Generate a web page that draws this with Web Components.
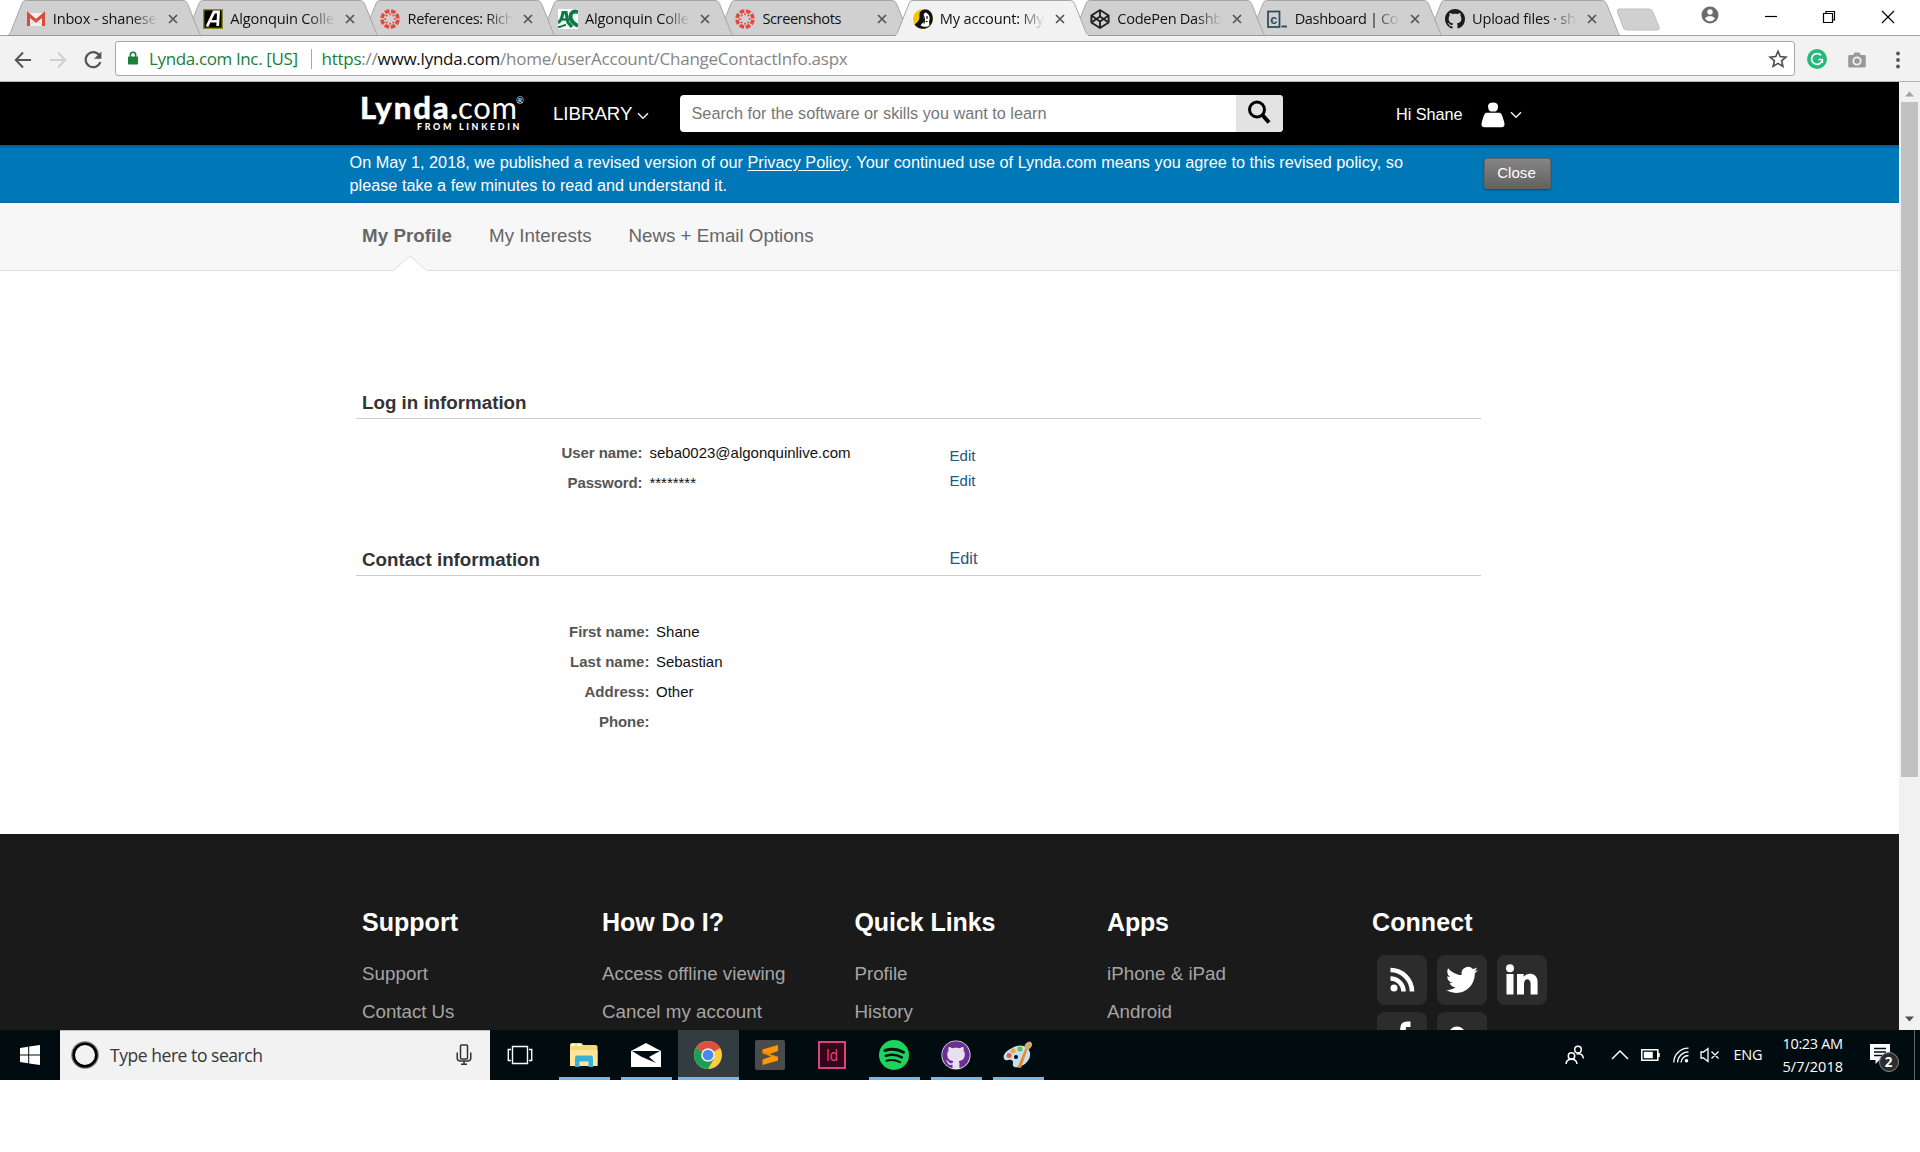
<!DOCTYPE html>
<html lang="en">
<head>
<meta charset="utf-8">
<title>My account: My Profile</title>
<style>
html,body{margin:0;padding:0;background:#fff}
body{width:1920px;height:1152px;overflow:hidden;font-family:"Liberation Sans",Arial,sans-serif}
</style>
</head>
<body>
<desktop-screen></desktop-screen>
<script>
const ICONS = {
gmail:[20,20,'<rect x="1" y="4" width="18" height="13" fill="#f1f1f1"/><path d="M2.500 17V5.500l7.500 6.500 7.500-6.500V17" fill="none" stroke="#d54b3d" stroke-width="3"/><path d="M4.500 16l4-4.500M15.500 16l-4-4.500" stroke="#ccc"/>'],
alg:[20,20,'<rect x=".7" y=".7" width="18.6" height="18.6" fill="#000" stroke="#8d8a1d" stroke-width="1.4"/><path d="M4 17.5L11 3h4.5l-.8 14" fill="none" stroke="#fff" stroke-width="2.8"/><path d="M7.5 12.3h7" stroke="#fff" stroke-width="2.4"/>'],
canvas:[20,20,'<circle cx="10" cy="10" r="8" fill="none" stroke="#e2483c" stroke-width="3.6" stroke-dasharray="4.6 1.68" transform="rotate(6 10 10)"/><g fill="#e2483c"><circle cx="10" cy="5.2" r="1"/><circle cx="10" cy="14.8" r="1"/><circle cx="5.2" cy="10" r="1"/><circle cx="14.8" cy="10" r="1"/><circle cx="6.6" cy="6.6" r="1"/><circle cx="13.4" cy="6.6" r="1"/><circle cx="6.6" cy="13.4" r="1"/><circle cx="13.4" cy="13.4" r="1"/></g>'],
ac:[20,20,'<rect width="20" height="20" fill="#fff"/><path d="M0 13.500c3-1 4-4 5-10h3l2 10 4 4.500" fill="none" stroke="#0b7a43" stroke-width="3.200"/><path d="M4 10.500h5" stroke="#0b7a43" stroke-width="2.400"/><path d="M20 3c-5-1.500-7.500 1-7.500 4.500s3 7 7.500 9.500" fill="none" stroke="#0b7a43" stroke-width="4"/><path d="M0 18c4 0 5-2 8-2" fill="none" stroke="#0b7a43" stroke-width="1.800"/>'],
lynda:[20,20,'<circle cx="10" cy="10" r="10" fill="#f8c600"/><path d="M13 .6C7 .6 6 4 6.500 8c0 3-1.500 5-5 7.500 3 4.500 10 6 15 2C20 14 20.500 10 19 5 17.500 2.500 15.500 .6 13 .6z" fill="#111"/><path d="M12.500 3.500c-2.500 1-2.500 5-1 8.500l-4 4.200c3 2.300 7 2 9 .3l-.5-4c1.500-3 .5-8-3.500-9z" fill="#fff"/><path d="M10.500 6.500c1 2 1.500 4 .5 8M14 7v3M12.500 12.500h2" stroke="#111" stroke-width="1.200" fill="none"/>'],
codepen:[20,20,'<g fill="none" stroke="#222" stroke-width="1.900" stroke-linejoin="round"><path d="M10 1l8.600 5.500v7L10 19l-8.600-5.500v-7z"/><path d="M1.400 6.500L10 12.500l8.600-6M1.400 13.500L10 7.500l8.600 6M10 1v6.500M10 12.500V19"/></g>'],
cdash:[20,20,'<rect x="1" y="2.500" width="11.500" height="15.500" fill="none" stroke="#234a5d" stroke-width="1.700"/><text x="3.200" y="14.500" font-family="Liberation Sans" font-weight="700" font-size="12.500" fill="#234a5d">c</text><path d="M14.500 17.500h5.500" stroke="#234a5d" stroke-width="1.800"/>'],
github:[16,16,'<path fill="#1b1b1b" d="M8 0C3.58 0 0 3.58 0 8c0 3.54 2.290 6.530 5.470 7.590.4.070.550-.170.550-.380 0-.190-.010-.820-.010-1.490-2.010.370-2.530-.490-2.690-.940-.090-.230-.480-.940-.820-1.130-.280-.150-.680-.520-.010-.530.630-.010 1.080.580 1.230.820.720 1.210 1.870.870 2.330.660.070-.520.280-.870.510-1.070-1.780-.2-3.640-.890-3.640-3.950 0-.870.310-1.590.820-2.150-.080-.2-.360-1.020.080-2.120 0 0 .670-.210 2.200.820.640-.180 1.320-.270 2-.270.680 0 1.360.090 2 .270 1.530-1.040 2.200-.820 2.200-.820.440 1.100.160 1.920.080 2.120.510.560.820 1.270.820 2.150 0 3.070-1.870 3.750-3.650 3.950.290.250.540.730.540 1.480 0 1.070-.010 1.930-.010 2.200 0 .210.150.460.550.380A8.013 8.013 0 0016 8c0-4.420-3.580-8-8-8z"/>'],
x:[10,10,'<path d="M1 1l8 8M9 1L1 9" stroke="#555" stroke-width="1.700"/>'],
back:[18,18,'<path d="M17 9H2M9 1.500L1.800 9 9 16.500" fill="none" stroke="#555" stroke-width="2"/>'],
fwd:[18,18,'<path d="M1 9h15M9 1.500L16.200 9 9 16.500" fill="none" stroke="#d0d0d0" stroke-width="2"/>'],
reload:[20,20,'<path d="M16.200 5.200A7.500 7.500 0 1 0 17.300 12" fill="none" stroke="#555" stroke-width="2.200"/><path d="M18.400 1.500v7.300h-7.300z" fill="#555"/>'],
lock:[12,14,'<rect x="1" y="5.500" width="10" height="8" rx=".8" fill="#188038"/><path d="M3.300 6V3.900a2.700 2.700 0 0 1 5.400 0V6" fill="none" stroke="#188038" stroke-width="1.500"/>'],
star:[20,20,'<path d="M10 2.300l2.200 5.300 5.700.5-4.300 3.700 1.300 5.600-4.900-3-4.900 3 1.300-5.600L2.100 8.100l5.700-.5z" fill="none" stroke="#4c4c4c" stroke-width="1.600"/>'],
gram:[20,20,'<circle cx="10" cy="10" r="10" fill="#25b97a"/><path d="M14 6.300A5.400 5.400 0 1 0 15.400 10.500M15.300 14v-3.500h-3.800" fill="none" stroke="#fff" stroke-width="1.700"/>'],
camera:[18,18,'<path d="M1.500 4h3.700l1.300-2.500h5L12.800 4h3.700a1.300 1.300 0 0 1 1.300 1.300v10a1.300 1.300 0 0 1-1.300 1.300h-15A1.300 1.300 0 0 1 .2 15.300v-10A1.300 1.300 0 0 1 1.500 4z" fill="#999"/><circle cx="9" cy="10" r="3.700" fill="none" stroke="#f2f2f2" stroke-width="1.800"/>'],
dots:[4,18,'<g fill="#555"><circle cx="2" cy="2.500" r="1.900"/><circle cx="2" cy="9" r="1.900"/><circle cx="2" cy="15.500" r="1.900"/></g>'],
newtab:[46,24,'<path d="M3 1h30q3 0 4 3l6 15q1 3-2 3H11q-3 0-4-3L1.500 4Q1 1 3 1z" fill="#d0d0d0" stroke="#c0c0c0"/>'],
person:[18,18,'<circle cx="9" cy="9" r="8.500" fill="#6b6b6b"/><circle cx="9" cy="6" r="2.700" fill="#fff"/><path d="M3.800 12.200q5.200-4.400 10.400 0-2 3-5.200 3t-5.200-3z" fill="#fff"/>'],
min:[12,14,'<path d="M0 7.500h12" stroke="#000" stroke-width="1.200"/>'],
restore:[14,14,'<path d="M1.500 3.500h9v9h-9zM4 3.500v-2h8.500V10h-2" fill="none" stroke="#000" stroke-width="1.200"/>'],
close:[14,14,'<path d="M1 1l12 12M13 1L1 13" stroke="#000" stroke-width="1.200"/>'],
chev:[12,8,'<path d="M1 1.300l5 5 5-5" fill="none" stroke="#eee" stroke-width="1.500"/>'],
mag:[24,24,'<circle cx="10" cy="9.500" r="7.500" fill="none" stroke="#000" stroke-width="3"/><path d="M15 14.500l7 8" stroke="#000" stroke-width="4"/>'],
user:[26,26,'<path d="M8 4.500Q8 .6 13 .6t5 3.900-2.500 5h-5Q8 8 8 4.500zM6.500 10.800h13q2 0 3.200 4.500 1.800 5.200 1.800 7.200 0 2.700-3 2.700h-17q-3 0-3-2.700 0-2 1.800-7.200 1.200-4.500 3.200-4.500z" fill="#fff"/>'],
rss:[26,26,'<circle cx="5" cy="21" r="3.500" fill="#fff"/><path d="M1.500 11.500A13 13 0 0 1 14.500 24.500M1.500 3A21.500 21.500 0 0 1 23 24.500" fill="none" stroke="#fff" stroke-width="4.600"/>'],
twitter:[24,24,'<path fill="#fff" d="M23.953 4.570a10 10 0 01-2.825.775 4.958 4.958 0 002.163-2.723c-.951.555-2.005.959-3.127 1.184a4.920 4.920 0 00-8.384 4.482C7.690 8.095 4.067 6.130 1.640 3.162a4.822 4.822 0 00-.666 2.475c0 1.710.870 3.213 2.188 4.096a4.904 4.904 0 01-2.228-.616v.060a4.923 4.923 0 003.946 4.827 4.996 4.996 0 01-2.212.085 4.936 4.936 0 004.604 3.417 9.867 9.867 0 01-6.102 2.105c-.390 0-.779-.023-1.170-.067a13.995 13.995 0 007.557 2.209c9.053 0 13.998-7.496 13.998-13.985 0-.210 0-.420-.015-.630A9.935 9.935 0 0024 4.590z"/>'],
linkedin:[34,32,'<g fill="#fff"><circle cx="5" cy="4.300" r="4"/><rect x="1.500" y="10" width="7" height="20.500"/><path d="M12 10h6.600v2.800c3.500-5 14-4.500 14 5V30.500h-7V19.800c0-6-6.600-6-6.600 0v10.700h-7z"/></g>'],
fb:[20,30,'<path d="M16.500 3.200H13q-4 0-4 4V30M3 14h12" fill="none" stroke="#fff" stroke-width="5.600"/>'],
gplus:[30,30,'<circle cx="12" cy="10" r="6.500" fill="none" stroke="#fff" stroke-width="4"/>'],
win:[20,20,'<path fill="#fff" d="M0 3l8.200-1.200v7.700H0zM9.200 1.600L20 0v9.500H9.200zM0 10.500h8.200v7.700L0 17zM9.200 10.500H20V20L9.200 18.400z"/>'],
cortana:[28,28,'<circle cx="14" cy="14" r="12.200" fill="none" stroke="#000" stroke-opacity=".5" stroke-width="3.200"/><circle cx="14" cy="14" r="11.300" fill="none" stroke="#000" stroke-width="2.600"/>'],
mic:[16,22,'<g fill="none" stroke="#333" stroke-width="1.500"><rect x="4.500" y="1" width="7" height="14" rx="1"/><path d="M1.200 8.500V14q0 3 3.300 3h7q3.300 0 3.300-3V8.500M8 17v3M5 20.200h6"/></g>'],
taskview:[26,20,'<g fill="none" stroke="#fff" stroke-width="1.400"><path d="M5.500 1.500h15v17h-15zM4 4.500H1.300v11H4M22 4.500h2.700v11H22"/></g>'],
folder:[30,26,'<path d="M1 3q0-2 2-2h8q3 0 3 2h12.500q2 0 2 2v18q0 1-1 1h-25.500q-1 0-1-1z" fill="#f7d774"/><path d="M1 8h27.500v16H1z" fill="#ffe69a"/><path d="M2 2h4v2H2zM8 2h4v2H8z" fill="#fff"/><path d="M6 25V16q0-2.500 2.500-2.500h13q2.500 0 2.500 2.500v9h-4.500v-5.500h-9V25z" fill="#38b0d8"/>'],
mail:[30,24,'<path d="M0 8L15 0l15 8v16H0z" fill="#fff"/><path d="M1 8h28L18 14l7 6L10 13.500z" fill="#010c10"/>'],
chrome:[28,28,'<circle cx="14" cy="14" r="14" fill="#fbce40"/><path d="M14 14L1.900 7A14 14 0 0 1 26.100 7z" fill="#dd4f43"/><path d="M14 0a14 14 0 0 1 12.100 7H14z" fill="#dd4f43"/><path d="M1.900 7A14 14 0 0 0 14 28l6-10.500-6-3.500z" fill="#1a9f5b"/><circle cx="14" cy="14" r="6.800" fill="#f1f1f1"/><circle cx="14" cy="14" r="5.300" fill="#4a87f0"/>'],
sublime:[30,30,'<rect width="30" height="30" rx="2" fill="#4b4b4b"/><path d="M7.500 9.500L23 5v6l-8.500 3L23 16.800v3.700L7.500 25v-5.500L16 16.500 7.500 13.500z" fill="#ff9800"/><path d="M7.500 13.500l15.500 4-8.500-3.500-6-2z" fill="#d97c00"/>'],
indesign:[28,28,'<rect x="1" y="1" width="26" height="26" fill="#33061b" stroke="#f0478b" stroke-width="1.800"/><text x="14" y="19.500" text-anchor="middle" font-family="Open Sans" font-size="15.500" textLength="12" lengthAdjust="spacingAndGlyphs" fill="#f0478b">Id</text>'],
spotify:[30,30,'<circle cx="15" cy="15" r="15" fill="#1ed45f"/><g fill="none" stroke="#03120a" stroke-linecap="round"><path d="M6 10.500q9.500-3 18.500 1.800" stroke-width="3"/><path d="M6.800 15.800q8.500-2.500 16 1.600" stroke-width="2.500"/><path d="M7.500 20.700q7-2 13.500 1.500" stroke-width="2"/></g>'],
ghdesk:[30,30,'<circle cx="15" cy="15" r="14.600" fill="#e8dff0"/><g transform="translate(1.200 1.200) scale(1.725)"><path fill="#6b2f94" d="M8 0C3.580 0 0 3.580 0 8c0 3.540 2.290 6.530 5.470 7.590.4.070.550-.170.550-.380 0-.190-.010-.820-.010-1.490-2.010.370-2.530-.490-2.690-.940-.090-.230-.480-.940-.820-1.130-.280-.150-.680-.520-.010-.530.630-.010 1.080.580 1.230.820.720 1.210 1.870.870 2.330.660.070-.520.280-.870.510-1.070-1.780-.2-3.640-.890-3.640-3.950 0-.870.310-1.590.820-2.150-.080-.2-.360-1.020.080-2.120 0 0 .670-.210 2.200.820.640-.180 1.320-.270 2-.270.680 0 1.360.090 2 .270 1.530-1.040 2.200-.820 2.200-.820.440 1.100.160 1.920.080 2.120.510.560.820 1.270.820 2.150 0 3.070-1.870 3.750-3.650 3.950.290.250.540.730.540 1.480 0 1.070-.010 1.930-.010 2.200 0 .210.150.460.550.380A8.013 8.013 0 0016 8c0-4.420-3.580-8-8-8z"/></g>'],
paint:[30,30,'<path d="M9 8c8-5 17-2 18 5 1 6-4 12-11 14-5 1-7-1-6-4 .5-3-2-4-5-3-4 1-5-2-4-5 1-3 4-5 8-7z" fill="#c7dff0"/><circle cx="13" cy="17" r="2" fill="#010c10"/><circle cx="6" cy="15.500" r="2.500" fill="#e25a4c"/><circle cx="10" cy="11" r="2.500" fill="#f0a638"/><circle cx="17" cy="9" r="2.600" fill="#6cc04a"/><path d="M14.500 27.500L22.500 8l2 1-6.500 19z" fill="#e28c2e"/><path d="M21.500 7q0-5 6-5.500 2 2 1.500 4-2 4-4.500 4z" fill="#d4aa70"/>'],
people:[20,20,'<g fill="none" stroke="#fff" stroke-width="1.500"><circle cx="13" cy="4.500" r="3.300"/><circle cx="6.500" cy="11" r="3.200"/><path d="M1 19q.5-4.800 5.500-4.800T12 19M11.500 9q6-1.500 7 4.500"/></g>'],
up:[18,10,'<path d="M1 9l8-8 8 8" fill="none" stroke="#fff" stroke-width="1.500"/>'],
battery:[20,12,'<path d="M.8.800h16v10.400H.8zM18 4v4" fill="none" stroke="#fff" stroke-width="1.500"/><rect x="2.800" y="2.800" width="9" height="6.400" fill="#fff"/>'],
wifi:[16,16,'<g fill="none" stroke="#fff" stroke-width="1.300"><path d="M.8 15.500A14.500 14.500 0 0 1 15.500 1.200"/><path d="M4.500 15.500A11 11 0 0 1 15.500 4.800M8 15.500a7.500 7.500 0 0 1 7.500-7" /></g><circle cx="13.500" cy="13.800" r="1.800" fill="#fff"/>'],
mute:[20,16,'<path d="M1 5h2.500L8 1.500v13L3.500 11H1zM11.500 4.500l7 7M18.500 4.500l-7 7" fill="none" stroke="#fff" stroke-width="1.300"/>'],
note:[22,20,'<path d="M0 0h20v16H9.500L5.500 20v-4H0z" fill="#fff"/><path d="M4 4.500h12M4 8h12M4 11.500h12" stroke="#010c10" stroke-width="1.300"/>']
};
class Base extends HTMLElement{
  connectedCallback(){ if(!this.shadowRoot){ this.attachShadow({mode:'open'}).innerHTML=this.render(); this.ready&&this.ready(); } }
}
/* Single-line text tracked out to a given width */
customElements.define('fit-text',class extends Base{
  render(){return '<style>:host{display:block;flex:none;white-space:nowrap;line-height:20px}span{display:inline-block}</style><span><slot></slot></span>'}
  ready(){
    const w=+this.getAttribute('w'); if(!w) return;
    const s=this.shadowRoot.querySelector('span');
    const n=this.textContent.length, nat=s.getBoundingClientRect().width;
    this.style.width=w+'px';
    if(n>1) s.style.letterSpacing=((w-nat)/(n-1)).toFixed(3)+'px';
  }
});
customElements.define('ui-icon',class extends Base{
  render(){const [a,b,c]=ICONS[this.getAttribute('name')];const w=this.getAttribute('w')||a,h=this.getAttribute('h')||b;
  return `<style>:host{display:block;flex:none;width:${w}px;height:${h}px}svg{display:block}</style><svg width="${w}" height="${h}" viewBox="0 0 ${a} ${b}">${c}</svg>`}
});
customElements.define('browser-tab',class extends Base{
  render(){const on=this.hasAttribute('active');
  return `<style>:host{display:grid;flex:none;width:194px;height:36px;margin-right:-16.600px}
  svg,.c{grid-area:1/1}.c{display:flex;align-items:flex-start}
  ui-icon.f{margin:9px 0 0 18px}
  .t{width:106px;margin:8px 0 0 7.300px;overflow:hidden;-webkit-mask-image:linear-gradient(90deg,#000 74%,transparent 99%)}
  .t.full{-webkit-mask-image:none}
  fit-text{font:14.600px "Open Sans","Noto Sans",sans-serif;line-height:20px;color:#111}
  ui-icon.x{margin:14px 0 0 9px}</style>
  <svg width="194" height="36"><path d="M0 35.500Q1.500 35 2.500 32.500L14 3.500Q15.200.500 17.500.500H175.500Q178 .5 179.500 3.500L191 32.500Q192 35 193.500 35.500" fill="${on?'#f2f2f2':'#d0d0d0'}" stroke="#a6a6a6"/>${on?'<path d="M1 35.500h192" stroke="#f2f2f2" stroke-width="1.600"/>':'<path d="M0 35.500h194" stroke="#999"/>'}</svg>
  <div class="c"><ui-icon class="f" name="${this.getAttribute('icon')}" w="20" h="20"></ui-icon><div class="t ${this.hasAttribute('full')?'full':''}"><fit-text w="${this.getAttribute('w')}">${this.getAttribute('label')}</fit-text></div><ui-icon class="x" name="x"></ui-icon></div>`}
});
customElements.define('browser-chrome',class extends Base{
  render(){
  const tabs=[['gmail','Inbox - shanese',104],['alg','Algonquin Colle',104],['canvas','References: Rich',106],['ac','Algonquin Colle',104],['canvas','Screenshots',79],['lynda','My account: My',104],['codepen','CodePen Dashb',105],['cdash','Dashboard | Co',104],['github','Upload files · sh',104]];
  return `<style>:host{display:flex;flex-direction:column;flex:none;height:82px;background:#f2f2f2;box-sizing:border-box;border-bottom:1px solid #b5b5b5}
  .strip{display:flex;height:36px;background:#fff;box-shadow:inset 0 -1px #a6a6a6;padding-left:7.500px;align-items:flex-start;flex:none}
  .bar{display:flex;align-items:flex-start}
  .bar>ui-icon{margin-top:15px}
  .omni{display:flex;align-items:center;box-sizing:border-box;width:1680px;height:35px;margin:5px 0 0 12px;border:1px solid #a9a9a9;border-radius:3px;background:#fff}
  .omni fit-text{font:17px "Open Sans","Noto Sans",sans-serif;line-height:34px;color:#858585}
  .omni .g{color:#188038}.k{color:#111}
  .sep{width:1px;height:20px;background:#aaa;margin:0 10px 0 12.500px}</style>
  <div class="strip">${tabs.map((t,i)=>`<browser-tab icon="${t[0]}" label="${t[1]}" w="${t[2]}" style="z-index:${i==5?20:9-i}" ${i==5?'active':''} ${i==4?'full':''}></browser-tab>`).join('')}
  <ui-icon name="newtab" w="46" h="24" style="margin:8px 0 0 12px"></ui-icon>
  <ui-icon name="person" style="margin:6px 0 0 38.500px"></ui-icon><ui-icon name="min" style="margin:9px 0 0 46.500px"></ui-icon><ui-icon name="restore" style="margin:10px 0 0 45px"></ui-icon><ui-icon name="close" style="margin:10px 0 0 45px"></ui-icon></div>
  <div class="bar"><ui-icon name="back" style="margin-left:14px"></ui-icon><ui-icon name="fwd" style="margin-left:17px"></ui-icon><ui-icon name="reload" style="margin:14px 0 0 16px"></ui-icon>
  <div class="omni"><ui-icon name="lock" style="margin:-1px 0 0 11px"></ui-icon><fit-text class="g" w="149" style="margin-left:10px;color:#188038">Lynda.com Inc. [US]</fit-text><div class="sep"></div><fit-text w="526">
<span class="g">https</span>://<span class="k">www.lynda.com</span>/home/userAccount/ChangeContactInfo.aspx</fit-text><ui-icon name="star" style="margin-left:auto;margin-right:6px"></ui-icon></div>
  <ui-icon name="gram" style="margin:13px 0 0 12px"></ui-icon><ui-icon name="camera" style="margin-left:21px"></ui-icon><ui-icon name="dots" style="margin-left:29.500px"></ui-icon></div>`}
});
customElements.define('site-header',class extends Base{
  render(){return `<style>:host{display:flex;flex:none;height:63px;background:#000;color:#fff;align-items:flex-start;padding-left:360px;box-sizing:border-box}
  .logo{width:164px;font-family:Lato,sans-serif}
  .word{display:flex;margin-top:15px;font-size:31px;height:20px}
  .reg{font-size:9.500px;line-height:10px;margin:-1px 0 0 -1px}
  .lib,.hi{display:flex;align-items:flex-start}
  .search{display:flex;width:603px;height:37px;margin:13px 0 0 31px;border-radius:4px;overflow:hidden;background:#fff}
  .search fit-text{font-size:16.250px;line-height:37px;color:#767676;margin-left:12px}
  .btn{width:47px;background:#e3e3e3;margin-left:auto;display:flex;justify-content:center}</style>
  <div class="logo"><div class="word"><fit-text w="98" style="font-weight:900;-webkit-text-stroke:.4px #fff">Lynda.</fit-text><fit-text w="59">com</fit-text><span class="reg">®</span></div><fit-text w="102.500" style="font-size:8.900px;font-weight:900;line-height:10px;margin:5.200px 0 0 57px">FROM LINKEDIN</fit-text></div>
  <div class="lib"><fit-text w="79.500" style="font-size:18.750px;margin:21.500px 0 0 29px">LIBRARY</fit-text><ui-icon name="chev" style="margin:30px 0 0 4px"></ui-icon></div>
  <div class="search"><fit-text w="355">Search for the software or skills you want to learn</fit-text><div class="btn"><ui-icon name="mag" style="margin-top:5px;margin-left:0"></ui-icon></div></div>
  <div class="hi"><fit-text w="66.500" style="font-size:16.250px;margin:21.500px 0 0 113.500px">Hi Shane</fit-text><ui-icon name="user" style="margin:19.500px 0 0 17px"></ui-icon><ui-icon name="chev" style="margin:29px 0 0 4px"></ui-icon></div>`}
});
customElements.define('policy-banner',class extends Base{
  render(){return `<style>:host{display:flex;flex:none;height:58px;background:linear-gradient(#035a8c,#0077b7 4px,#0077b7 56px,#116a9b);color:#fff;padding-left:349.500px;box-sizing:border-box}
  .m{width:1134px;padding-top:6px;font-size:16.250px}.m fit-text{line-height:23px}
  .b{height:29px;width:65px;margin-top:13px;border-radius:3px;border:1px solid #666;background:linear-gradient(#858585,#626262);box-shadow:0 1px 2px #0006;display:flex;justify-content:center;font-size:15px}
  u{text-underline-offset:2px}</style>
  <div class="m"><fit-text w="1053.500">On May 1, 2018, we published a revised version of our <u>Privacy Policy</u>. Your continued use of Lynda.com means you agree to this revised policy, so</fit-text><fit-text w="377.500">please take a few minutes to read and understand it.</fit-text></div>
  <div class="b"><fit-text w="38.500" style="line-height:27px;margin-left:-1px">Close</fit-text></div>`}
});
customElements.define('profile-nav',class extends Base{
  render(){return `<style>:host{display:flex;flex-direction:column;flex:none;height:68px;background:#f7f7f7;box-shadow:inset 0 -1px #ddd;color:#666;font-size:18.750px}
  .r{display:flex;padding:23px 0 0 362px;gap:37px}
  svg{display:block;margin:9px 0 0 393px}</style>
  <div class="r"><fit-text w="90" style="font-weight:700">My Profile</fit-text><fit-text w="102.500">My Interests</fit-text><fit-text w="185">News + Email Options</fit-text></div>
  <svg width="34" height="16"><path d="M.5 15.500L17 .8 33.500 15.500V16H.5z" fill="#fff"/><path d="M.5 15.500L17 .8 33.500 15.500" fill="none" stroke="#ddd"/></svg>`}
});
customElements.define('section-title',class extends Base{
  render(){return `<style>:host{display:flex;box-sizing:border-box;border-bottom:1px solid #ccc;padding-left:6px;font-size:18.750px;color:#333;font-weight:700;width:1125px}</style><slot></slot>`}
});
customElements.define('field-row',class extends Base{
  render(){return `<style>:host{display:flex;height:30px;font-size:15px;color:#111}.l{width:var(--lw);display:flex;justify-content:flex-end;color:#555;font-weight:700;margin-right:var(--g)}</style><div class="l"><fit-text w="${this.getAttribute('lw')}">${this.getAttribute('label')}</fit-text></div>${this.getAttribute('vw')?`<fit-text w="${this.getAttribute('vw')}">${this.getAttribute('value')}</fit-text>`:''}`}
});
customElements.define('account-content',class extends Base{
  render(){return `<style>:host{display:flex;flex-direction:column;flex:none;height:563px;padding-left:356px;background:#fff}
  .body{display:flex}.a{width:593.500px}.e{color:#23587f;font-size:15px;display:flex;flex-direction:column}
  .edit{color:#23587f;font-weight:400;font-size:16.250px}</style>
  <section-title style="padding-top:122px;height:148px"><fit-text w="164.500">Log in information</fit-text></section-title>
  <div class="body" style="height:130px;--lw:286.500px;--g:7px"><div class="a" style="padding-top:23.800px"><field-row label="User name:" lw="81" value="seba0023@algonquinlive.com" vw="201"></field-row><field-row label="Password:" lw="75" value="********" vw="46.500"></field-row></div>
  <div class="e" style="padding-top:27px;gap:5px"><fit-text w="26">Edit</fit-text><fit-text w="26">Edit</fit-text></div></div>
  <section-title style="height:27px"><fit-text w="178" style="margin-top:.6px">Contact information</fit-text><fit-text class="edit" w="28" style="margin:-1px 0 0 409.500px">Edit</fit-text></section-title>
  <div class="body" style="--lw:293.500px;--g:6.500px"><div class="a" style="padding-top:45.800px"><field-row label="First name:" lw="80.500" value="Shane" vw="43.500"></field-row><field-row label="Last name:" lw="79.500" value="Sebastian" vw="66.500"></field-row><field-row label="Address:" lw="65" value="Other" vw="37.500"></field-row><field-row label="Phone:" lw="50.500"></field-row></div></div>`}
});
customElements.define('footer-column',class extends Base{
  render(){const L=JSON.parse(this.getAttribute('links')||'[]');return `<style>:host{display:flex;flex:none;flex-direction:column;padding-top:78px;box-sizing:border-box}
  h3{margin:0 0 32px;font-size:25px;font-weight:700;color:#fff}.k{display:flex;flex-direction:column;gap:18px;font-size:18.750px;color:#a5a5a5}</style>
  <h3><fit-text w="${this.getAttribute('hw')}">${this.getAttribute('heading')}</fit-text></h3><div class="k">${L.map(l=>`<fit-text w="${l[1]}">${l[0]}</fit-text>`).join('')}</div><slot></slot>`}
});
customElements.define('site-footer',class extends Base{
  render(){return `<style>:host{display:flex;flex:none;height:196px;overflow:hidden;background:#1a1a1a;padding-left:362px;box-sizing:border-box}
  .tiles{display:grid;grid-template-columns:repeat(3,50px);gap:7px 10px;margin:-9px 0 0 5px}
  .tile{height:50px;border-radius:8px;background:#2c2c2c;display:flex;justify-content:center;align-items:center}.top{align-items:flex-start}</style>
  <footer-column style="width:240px" heading="Support" hw="96" links='[["Support",66],["Contact Us",92.500]]'></footer-column>
  <footer-column style="width:252.500px" heading="How Do I?" hw="122" links='[["Access offline viewing",183.500],["Cancel my account",160]]'></footer-column>
  <footer-column style="width:252.500px" heading="Quick Links" hw="141" links='[["Profile",53],["History",58.500]]'></footer-column>
  <footer-column style="width:265px" heading="Apps" hw="62" links='[["iPhone &amp; iPad",119],["Android",65]]'></footer-column>
  <footer-column heading="Connect" hw="100.500"><div class="tiles"><div class="tile"><ui-icon name="rss"></ui-icon></div><div class="tile"><ui-icon name="twitter" w="32" h="32"></ui-icon></div><div class="tile"><ui-icon name="linkedin"></ui-icon></div><div class="tile top"><ui-icon name="fb" style="margin:9px 0 0 4px"></ui-icon></div><div class="tile top"><ui-icon name="gplus" style="margin-top:13px;margin-left:-5px"></ui-icon></div></div></footer-column>`}
});
customElements.define('scroll-bar',class extends Base{
  render(){return `<style>:host{display:flex;flex-direction:column;align-items:center;width:21px;height:948px;background:#f1f1f1;flex:none}
  .th{width:17px;height:675px;background:#c1c1c1;margin-top:5px}svg{display:block}.u{margin-top:9px}.d{margin-top:auto;margin-bottom:8px}</style>
  <svg class="u" width="9" height="6"><path d="M0 5.500L4.500.5 9 5.500z" fill="#a3a3a3"/></svg><div class="th"></div><svg class="d" width="9" height="6"><path d="M0 .5L4.500 5.500 9 .5z" fill="#505050"/></svg>`}
});
customElements.define('task-app',class extends Base{
  render(){const o=this.getAttribute('state');return `<style>:host{display:flex;flex:none;flex-direction:column;align-items:center;justify-content:center;height:50px;width:${o=='active'?61:51}px;box-sizing:border-box;${o?'box-shadow:inset 0 -3px #7db4e8;':''}${o=='active'?'background:#333c40':''}}</style><ui-icon name="${this.getAttribute('icon')}" style="margin-left:-1px"></ui-icon>`}
});
customElements.define('task-bar',class extends Base{
  render(){return `<style>:host{display:flex;flex:none;height:50px;background:#010c10;color:#fff;font-family:"Open Sans","Noto Sans",sans-serif;align-items:center}
  .s{display:flex;align-items:center;width:430px;height:50px;background:#f2f2f2;margin-left:20px;box-shadow:inset 0 1px #bbb}
  .s fit-text{font-size:17.500px;line-height:50px;color:#383838;margin-left:11px}
  .apps{display:flex;margin-left:26px}.tray{display:flex;align-items:center;margin-left:auto;font-size:14.500px}
  .clock{height:48px;padding-top:2px;margin-left:20px;align-self:flex-start}.clock fit-text{line-height:23px}
  .n{display:grid;width:32px;height:32px;margin:4px 0 0 26.500px}.n>*{grid-area:1/1}
  .badge{width:18px;height:18px;border-radius:50%;border:1px solid #888;background:#2b2d2e;margin:11px 0 0 9px;font-size:13.500px;line-height:18px;text-align:center;font-weight:700}
  .line{width:1px;height:50px;background:#5d6568;margin:0 5px 0 12.500px}</style>
  <ui-icon name="win" style="margin-left:20px"></ui-icon>
  <div class="s"><ui-icon name="cortana" style="margin-left:11px"></ui-icon><fit-text w="153">Type here to search</fit-text><ui-icon name="mic" style="margin-left:auto;margin-right:18px"></ui-icon></div>
  <ui-icon name="taskview" style="margin-left:17px"></ui-icon>
  <div class="apps"><task-app icon="folder" state="open"></task-app><task-app icon="mail" state="open" style="margin-left:11px"></task-app><task-app icon="chrome" state="active" style="margin-left:6px"></task-app><task-app icon="sublime" style="margin-left:6px"></task-app><task-app icon="indesign" style="margin-left:11px"></task-app><task-app icon="spotify" state="open" style="margin-left:11px"></task-app><task-app icon="ghdesk" state="open" style="margin-left:11px"></task-app><task-app icon="paint" state="open" style="margin-left:11px"></task-app></div>
  <div class="tray"><ui-icon name="people"></ui-icon><ui-icon name="up" style="margin-left:25.500px"></ui-icon><ui-icon name="battery" style="margin-left:12px"></ui-icon><ui-icon name="wifi" style="margin-left:12px"></ui-icon><ui-icon name="mute" style="margin-left:11px"></ui-icon><fit-text w="29" style="line-height:50px;margin-left:14px">ENG</fit-text>
  <div class="clock"><fit-text w="60.500">10:23 AM</fit-text><fit-text w="60.500">5/7/2018</fit-text></div>
  <div class="n"><ui-icon name="note" style="margin-top:3px"></ui-icon><div class="badge">2</div></div><div class="line"></div></div>`}
});
customElements.define('desktop-screen',class extends Base{
  render(){return `<style>:host{display:flex;flex-direction:column;width:1920px;height:1152px;background:#fff;overflow:hidden}
  .view{display:flex;height:948px;flex:none}.page{display:flex;flex-direction:column;width:1899px}</style>
  <browser-chrome></browser-chrome><div class="view"><div class="page"><site-header></site-header><policy-banner></policy-banner><profile-nav></profile-nav><account-content></account-content><site-footer></site-footer></div><scroll-bar></scroll-bar></div><task-bar></task-bar>`}
});
</script>
</body>
</html>
